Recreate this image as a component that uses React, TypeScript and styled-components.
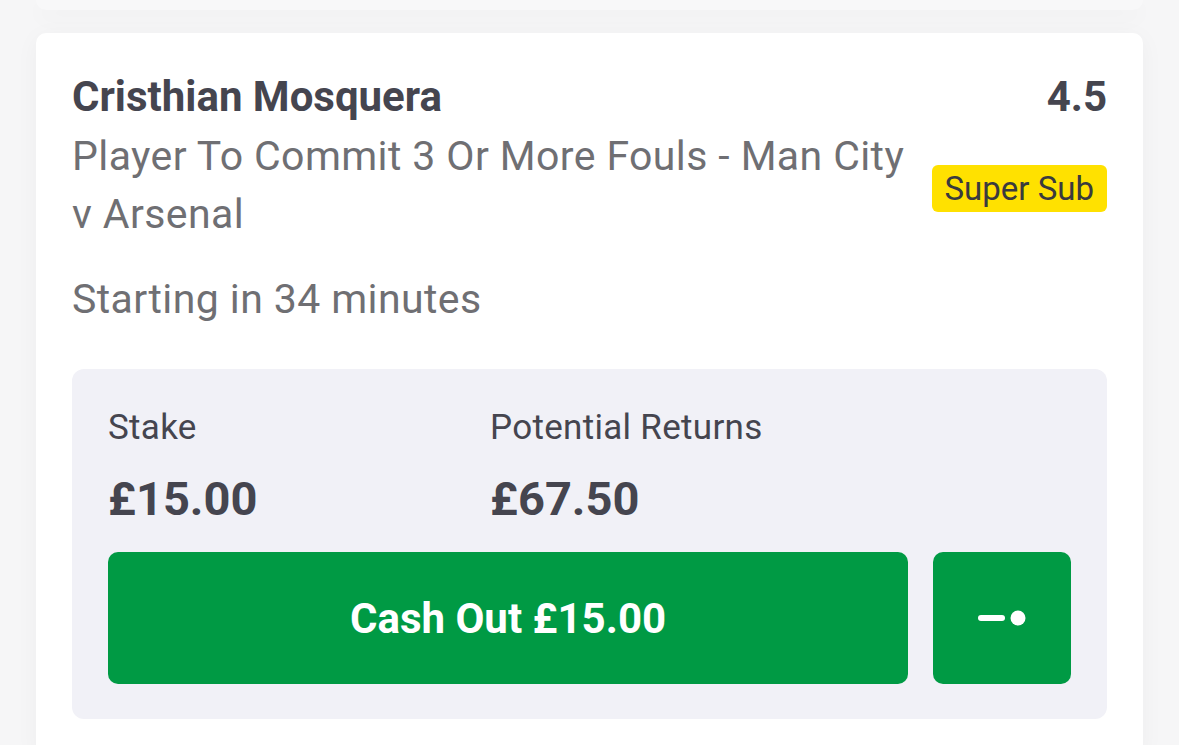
import styled, { createGlobalStyle } from "styled-components";

const GlobalStyle = createGlobalStyle`
  html, body {
    margin: 0;
    padding: 0;
    background: #f6f6f7;
    font-family: Roboto, "Liberation Sans", sans-serif;
  }
`;

export default function App() {
  return (
    <>
      <GlobalStyle />
      <Page>
        <PrevCard />
        <Card>
          <Header>
            <Info>
              <Title>Cristhian Mosquera</Title>
              <Market>Player To Commit 3 Or More Fouls - Man City v Arsenal</Market>
            </Info>
            <Side>
              <Odds>4.5</Odds>
              <Badge>Super Sub</Badge>
            </Side>
          </Header>
          <Starting>Starting in 34 minutes</Starting>
          <StakeBox>
            <Figures>
              <Figure>
                <Label>Stake</Label>
                <Amount>£15.00</Amount>
              </Figure>
              <Figure>
                <Label>Potential Returns</Label>
                <Amount>£67.50</Amount>
              </Figure>
            </Figures>
            <Actions>
              <CashOut>Cash Out £15.00</CashOut>
              <IconButton aria-label="Partial cash out">
                <svg width="48" height="16" viewBox="0 0 48 16">
                  <rect x="0" y="5" width="27" height="6" rx="3" fill="#fff" />
                  <circle cx="40" cy="8" r="7.5" fill="#fff" />
                </svg>
              </IconButton>
            </Actions>
          </StakeBox>
        </Card>
      </Page>
    </>
  );
}

const Page = styled.div`
  padding: 0 36px;
  display: flex;
  flex-direction: column;
`;

const PrevCard = styled.div`
  height: 10px;
  background: #f8f8f9;
  border-radius: 0 0 10px 10px;
  box-shadow: 0 8px 22px rgba(0, 0, 0, 0.035);
`;

const Card = styled.div`
  margin-top: 23px;
  background: #fff;
  border-radius: 10px;
  padding: 39px 36px 36px;
  box-shadow: 0 4px 24px rgba(0, 0, 0, 0.04);
`;

const Header = styled.div`
  display: flex;
  justify-content: space-between;
  gap: 24px;
`;

const Info = styled.div`
  display: flex;
  flex-direction: column;
  flex: 1;
`;

const Title = styled.div`
  font-size: 42px;
  font-weight: 700;
  color: #45454f;
  line-height: 50px;
`;

const Market = styled.div`
  margin-top: 5px;
  font-size: 41px;
  letter-spacing: 0.4px;
  color: #6f6f73;
  line-height: 58px;
  max-width: 850px;
`;

const Side = styled.div`
  display: flex;
  flex-direction: column;
  align-items: flex-end;
`;

const Odds = styled.div`
  font-size: 42px;
  font-weight: 700;
  color: #45454f;
  line-height: 50px;
`;

const Badge = styled.div`
  margin-top: 43px;
  background: #ffe100;
  color: #3a3a3e;
  font-size: 33px;
  line-height: 47px;
  padding: 0 13px;
  border-radius: 6px;
`;

const Starting = styled.div`
  margin-top: 32px;
  font-size: 41px;
  letter-spacing: 0.4px;
  color: #6f6f73;
  line-height: 48px;
`;

const StakeBox = styled.div`
  margin-top: 46px;
  background: #f1f1f7;
  border-radius: 12px;
  padding: 37px 36px 35px;
`;

const Figures = styled.div`
  display: grid;
  grid-template-columns: 382px 1fr;
`;

const Figure = styled.div`
  display: flex;
  flex-direction: column;
`;

const Label = styled.div`
  font-size: 35px;
  letter-spacing: 0.3px;
  color: #45454f;
  line-height: 44px;
`;

const Amount = styled.div`
  margin-top: 21px;
  font-size: 47px;
  font-weight: 700;
  color: #45454f;
  line-height: 56px;
`;

const Actions = styled.div`
  margin-top: 25px;
  display: flex;
  gap: 25px;
`;

const CashOut = styled.button`
  flex: 1;
  height: 132px;
  border: none;
  border-radius: 10px;
  background: #009a44;
  color: #fff;
  font-family: Roboto, "Liberation Sans", sans-serif;
  font-size: 42px;
  font-weight: 700;
`;

const IconButton = styled.button`
  width: 138px;
  height: 132px;
  border: none;
  border-radius: 10px;
  background: #009a44;
  display: flex;
  align-items: center;
  justify-content: center;
  padding: 0;
`;
